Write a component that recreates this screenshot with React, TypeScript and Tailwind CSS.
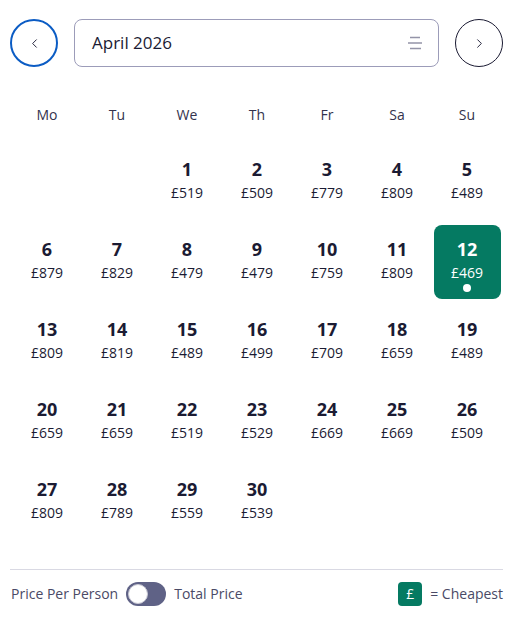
import { ChevronLeft, ChevronRight } from 'lucide-react';

type Day = { d: number; p: number } | null;

const days: Day[] = [
  null,
  null,
  { d: 1, p: 519 },
  { d: 2, p: 509 },
  { d: 3, p: 779 },
  { d: 4, p: 809 },
  { d: 5, p: 489 },
  { d: 6, p: 879 },
  { d: 7, p: 829 },
  { d: 8, p: 479 },
  { d: 9, p: 479 },
  { d: 10, p: 759 },
  { d: 11, p: 809 },
  { d: 12, p: 469 },
  { d: 13, p: 809 },
  { d: 14, p: 819 },
  { d: 15, p: 489 },
  { d: 16, p: 499 },
  { d: 17, p: 709 },
  { d: 18, p: 659 },
  { d: 19, p: 489 },
  { d: 20, p: 659 },
  { d: 21, p: 659 },
  { d: 22, p: 519 },
  { d: 23, p: 529 },
  { d: 24, p: 669 },
  { d: 25, p: 669 },
  { d: 26, p: 509 },
  { d: 27, p: 809 },
  { d: 28, p: 789 },
  { d: 29, p: 559 },
  { d: 30, p: 539 },
];

const weekdays = ['Mo', 'Tu', 'We', 'Th', 'Fr', 'Sa', 'Su'];

export default function App() {
  return (
    <div
      className="w-[519px] h-[625px] bg-white text-[#1b1b33]"
      style={{ fontFamily: '"Open Sans", "Liberation Sans", sans-serif' }}
    >
      <div className="pl-[10px] w-[503px] pt-[19px]">
        {/* month switcher */}
        <div className="flex items-center">
          <button className="w-12 h-12 rounded-full border-2 border-[#0b5cc4] flex items-center justify-center shrink-0">
            <ChevronLeft size={15} strokeWidth={1.5} className="text-[#1b1b33]" />
          </button>
          <div className="ml-4 w-[365px] h-12 rounded-lg border border-[#9c9cb9] flex items-center justify-between pl-[17px] pr-[15px]">
            <span className="text-[17px]">April 2026</span>
            <svg width="16" height="16" viewBox="0 0 16 16" className="text-[#9494a8]">
              <path d="M3 2.5h10M1 8h14M3 13.5h11" stroke="currentColor" strokeWidth="1.5" />
            </svg>
          </div>
          <button className="ml-4 w-12 h-12 rounded-full border border-[#1b1b33] flex items-center justify-center shrink-0">
            <ChevronRight size={15} strokeWidth={1.5} />
          </button>
        </div>

        {/* weekdays */}
        <div className="grid grid-cols-7 ml-[2px] w-[490px] mt-[36px] h-[24px] items-center">
          {weekdays.map((w) => (
            <div key={w} className="text-center text-sm text-[#33334d]">
              {w}
            </div>
          ))}
        </div>

        {/* days */}
        <div className="grid grid-cols-7 gap-y-[6px] ml-[2px] w-[490px] mt-[18px]">
          {days.map((day, i) =>
            day ? (
              <div
                key={i}
                className={
                  day.d === 12
                    ? 'mx-[1.5px] h-[74px] rounded-lg bg-[#057a62] text-white flex flex-col items-center pt-[11px]'
                    : 'mx-[1.5px] h-[74px] rounded-lg flex flex-col items-center pt-[11px]'
                }
              >
                <span className="text-lg font-bold leading-[26px]">{day.d}</span>
                <span className="text-sm leading-[20px] mt-[1px]">£{day.p}</span>
                {day.d === 12 && <span className="mt-[1px] w-2 h-2 rounded-full bg-white" />}
              </div>
            ) : (
              <div key={i} className="h-[74px]" />
            )
          )}
        </div>

        {/* footer */}
        <div className="mt-[30px] border-t border-[#d9d9e3]" />
        <div className="flex items-center justify-between pt-[12px] text-sm text-[#4a4a66]">
          <div className="flex items-center">
            <span className="ml-[1px]">Price Per Person</span>
            <span className="ml-[8px] w-[40px] h-[24px] rounded-full bg-[#5f6286] flex items-center px-[2px]">
              <span className="w-5 h-5 rounded-full bg-white border border-[#c8c8d4]" />
            </span>
            <span className="ml-[8px]">Total Price</span>
          </div>
          <div className="flex items-center">
            <span className="w-6 h-6 rounded bg-[#057a62] text-white flex items-center justify-center text-sm">
              £
            </span>
            <span className="ml-[8px]">= Cheapest</span>
          </div>
        </div>
      </div>
    </div>
  );
}
